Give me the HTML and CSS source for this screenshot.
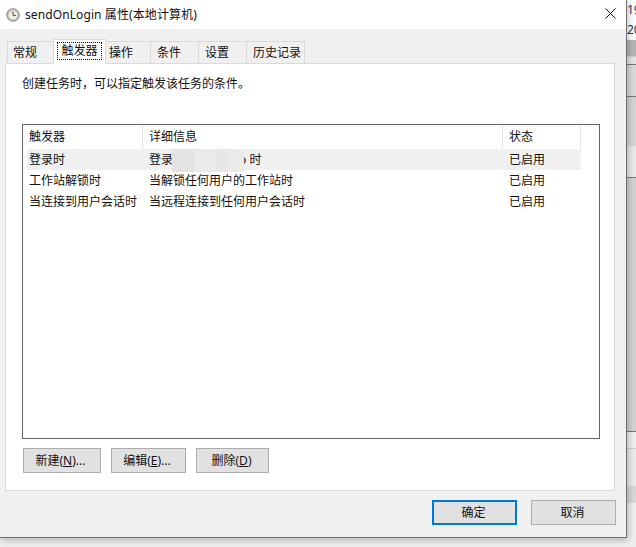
FILE: index.html
```html
<!DOCTYPE html>
<html lang="zh-CN">
<head>
<meta charset="utf-8">
<title>sendOnLogin 属性(本地计算机)</title>
<link rel="stylesheet" href="styles.css">
</head>
<body>
<div class="desk">
  <main class="window">
    <header class="titlebar">
      <svg class="clock" width="14" height="14" viewBox="0 0 14 14" aria-hidden="true">
        <circle cx="7" cy="7" r="6.3" fill="#b9b6ae" stroke="#8f8f8c" stroke-width="1"/>
        <circle cx="7" cy="7" r="4.6" fill="#f4efdc" stroke="#d9d6cc" stroke-width="0.6"/>
        <path d="M7 3.4V7.4H10" fill="none" stroke="#55534c" stroke-width="1"/>
      </svg>
      <span class="title">sendOnLogin 属性(本地计算机)</span>
      <svg class="close" width="11" height="11" viewBox="0 0 11 11" aria-hidden="true">
        <path d="M0.5 0.5L10.5 10.5M10.5 0.5L0.5 10.5" fill="none" stroke="#111" stroke-width="1"/>
      </svg>
    </header>
    <div class="content">
      <nav class="tabs">
        <div class="tab t1">常规</div>
        <div class="tab t2 active"><span class="focus">触发器</span></div>
        <div class="tab t3">操作</div>
        <div class="tab t4">条件</div>
        <div class="tab t5">设置</div>
        <div class="tab t6">历史记录</div>
      </nav>
      <section class="panel">
        <p class="hint">创建任务时，可以指定触发该任务的条件。</p>
        <div class="list">
          <div class="row head">
            <div class="cell">触发器</div>
            <div class="cell">详细信息</div>
            <div class="cell">状态</div>
          </div>
          <div class="row item selected">
            <div class="cell">登录时</div>
            <div class="cell">登录<span class="blur"></span>o 时</div>
            <div class="cell">已启用</div>
          </div>
          <div class="row item">
            <div class="cell">工作站解锁时</div>
            <div class="cell">当解锁任何用户的工作站时</div>
            <div class="cell">已启用</div>
          </div>
          <div class="row item">
            <div class="cell">当连接到用户会话时</div>
            <div class="cell">当远程连接到任何用户会话时</div>
            <div class="cell">已启用</div>
          </div>
        </div>
        <div class="actions">
          <button class="btn new">新建(<u>N</u>)...</button>
          <button class="btn edit">编辑(<u>E</u>)...</button>
          <button class="btn del">删除(<u>D</u>)</button>
        </div>
      </section>
      <footer class="dialog-buttons">
        <button class="btn dialog default">确定</button>
        <button class="btn dialog">取消</button>
      </footer>
    </div>
  </main>
  <aside class="side">
    <div class="s-text">19<br>20</div>
    <div class="s-a"></div>
    <div class="s-b"></div>
    <div class="s-c"></div>
    <div class="s-d"></div>
    <div class="s-e"></div>
    <div class="s-f"></div>
    <div class="s-g"></div>
    <div class="s-h"></div>
    <div class="s-i"></div>
    <div class="s-j"></div>
    <div class="s-k"></div>
    <div class="s-l"></div>
  </aside>
</div>
</body>
</html>
```
FILE: styles.css
```css
* { box-sizing: border-box; }
html, body { margin: 0; padding: 0; }
body {
  width: 636px;
  height: 547px;
  overflow: hidden;
  background: #efefef;
  font-family: "Noto Sans", "Noto Sans CJK SC", sans-serif;
  font-size: 12px;
  line-height: 16px;
  color: #111;
}
.desk { display: flex; align-items: flex-start; width: 636px; height: 547px; overflow: hidden; }

.window {
  position: relative;
  z-index: 1;
  flex: none;
  width: 627px;
  height: 538px;
  border-right: 1px solid #6f6f6f;
  border-bottom: 1px solid #6f6f6f;
  background: #f0f0f0;
  box-shadow: 1px 2px 7px rgba(0, 0, 0, 0.28);
  display: flex;
  flex-direction: column;
}

.titlebar {
  flex: none;
  height: 29px;
  background: #fff;
  display: flex;
  align-items: center;
  padding: 0 10px 0 6px;
}
.clock { flex: none; margin-right: 5px; }
.title { flex: 1; font-size: 12px; letter-spacing: 0.1px; color: #111; }
.close { flex: none; margin-bottom: 3px; }

.content { flex: 1; padding: 10px 10px 0 5px; display: flex; flex-direction: column; }

.tabs { display: flex; align-items: flex-end; height: 25px; padding-left: 2px; margin-bottom: -1px; position: relative; z-index: 1; }
.tab {
  height: 23px;
  border: 1px solid #d9d9d9;
  margin-left: -1px;
  padding-left: 6px;
  background: #f0f0f0;
  display: flex;
  align-items: center;
  color: #111;
}
.tab.t1 { width: 47px; margin-left: 0; padding-left: 5px; }
.tab.t2 { width: 53px; padding-left: 0; justify-content: center; }
.tab.t3 { width: 46px; padding-left: 3px; }
.tab.t4 { width: 49px; }
.tab.t5 { width: 49px; }
.tab.t6 { width: 59px; }
.tab.active {
  height: 25px;
  background: #fff;
  border-bottom-color: #fff;
  position: relative;
  z-index: 1;
}
.focus {
  width: 45px;
  height: 18px;
  border: 1px dotted #111;
  display: flex;
  align-items: center;
  justify-content: center;
  margin-bottom: 2px;
  white-space: nowrap;
}

.panel {
  width: 610px;
  height: 428px;
  background: #fff;
  border: 1px solid #d9d9d9;
  padding: 12px 15px 0 16px;
  display: flex;
  flex-direction: column;
}
.hint { margin: 0; height: 16px; color: #111; }

.list {
  margin-top: 32px;
  width: 578px;
  height: 315px;
  border: 1px solid #646464;
  background: #fff;
}
.row { display: grid; grid-template-columns: 120px 360px 78px; }
.cell { padding-left: 6px; white-space: nowrap; display: flex; align-items: center; height: 21px; color: #111; }
.head { height: 24px; }
.head .cell { height: 24px; border-right: 1px solid #e5e5e5; }
.item { margin-left: 4px; grid-template-columns: 116px 360px 78px; width: 554px; }
.item .cell:first-child { padding-left: 2px; }
.selected { background: #f0f0f0; }
.item .cell:nth-child(2) { padding-left: 6px; }

.blur {
  position: relative;
  z-index: 1;
  flex: none;
  width: 72px;
  height: 23px;
  margin: 0 -5px -1px -1px;
  background:
    linear-gradient(90deg, #e3e3e3 0 22px, #e9eaea 22px 44px, #e6e8e8 44px 56px, #ebebea 56px),
    #e8e8e8;
}

.actions { display: flex; gap: 10px; margin-top: 9px; padding-left: 1px; }
.btn {
  height: 25px;
  padding: 0;
  border: 1px solid #adadad;
  background: #e1e1e1;
  font: inherit;
  color: #111;
}
.btn.new { width: 78px; padding-right: 3px; }
.btn.edit { width: 75px; padding-right: 3px; }
.btn.del { width: 73px; padding-right: 2px; }

.dialog-buttons { display: flex; justify-content: flex-end; gap: 14px; margin-top: 9px; width: 611px; }
.btn.dialog { width: 85px; padding-right: 2px; }
.btn.default { border: 2px solid #0078d7; }

.side { flex: none; width: 9px; height: 547px; display: flex; flex-direction: column; overflow: hidden; background: #eee; }
.s-text { flex: none; height: 40px; background: #fff; line-height: 20px; font-size: 12px; white-space: nowrap; color: #1a3a5c; }
.s-a { flex: none; height: 16px; background: #b6b6b6; }
.s-b { flex: none; height: 1px; background: #cfcfcf; }
.s-c { flex: none; height: 7px; background: #e4e4e4; }
.s-d { flex: none; height: 1px; background: #777; }
.s-e { flex: none; height: 31px; background: #dadada; }
.s-f { flex: none; height: 1px; background: #777; }
.s-g { flex: none; height: 49px; background: #d4d4d4; }
.s-h { flex: none; height: 31px; background: #e8e8e8; }
.s-i { flex: none; height: 1px; background: #777; }
.s-j { flex: none; height: 253px; background: #d2d2d2; }
.s-k { flex: none; height: 1px; background: #777; }
.s-l { flex: 1; background: linear-gradient(180deg, #eee 0 16px, #ccc 16px 17px, #eaeaea 17px 54px, #d8d8d8 54px 71px, #eee 71px); }
```
